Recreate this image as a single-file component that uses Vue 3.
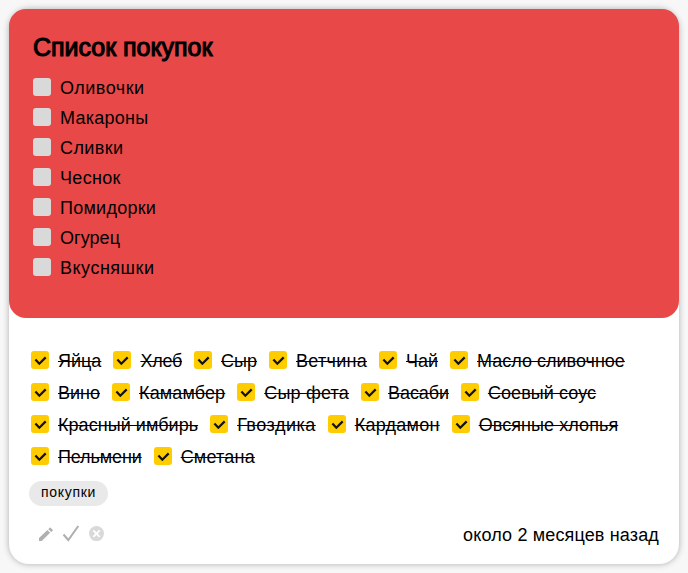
<script setup>
// Each entry: label and letter tracking in px
const pending = [
  ['Оливочки', 0.5], ['Макароны', 0.25], ['Сливки', 0.4], ['Чеснок', 0.33],
  ['Помидорки', 0.25], ['Огурец', 0.05], ['Вкусняшки', 0.5],
]
const done = [
  [['Яйца', 0], ['Хлеб', -0.25], ['Сыр', 0], ['Ветчина', 0.28], ['Чай', 0], ['Масло сливочное', 0]],
  [['Вино', 0], ['Камамбер', 0.13], ['Сыр фета', 0.2], ['Васаби', -0.1], ['Соевый соус', 0.08]],
  [['Красный имбирь', 0.05], ['Гвоздика', 0.5], ['Кардамон', 0.25], ['Овсяные хлопья', 0.07]],
  [['Пельмени', -0.12], ['Сметана', 0.2]],
]
</script>

<template>
  <article class="card">
    <section class="pending">
      <h1>Список покупок</h1>
      <ul class="todo">
        <li v-for="[name, track] in pending" :key="name"><span class="box"></span><span class="name" :style="{ letterSpacing: track + 'px' }">{{ name }}</span></li>
      </ul>
    </section>
    <section class="bought">
      <div v-for="(row, i) in done" :key="i" class="row">
        <label v-for="[name, track] in row" :key="name" class="item">
          <span class="box checked">
            <svg width="18" height="18" viewBox="0 0 18 18"><path d="M4.4 8.6 L8.3 12.7 L14.7 6.4" /></svg>
          </span>
          <s :style="{ letterSpacing: track + 'px' }">{{ name }}</s>
        </label>
      </div>
    </section>
    <div class="tags"><span class="tag">покупки</span></div>
    <footer>
      <div class="actions">
        <svg width="16" height="16" viewBox="0 0 16 16"><path fill="#b0b0b0" d="M1 12.1 9.4 4l2.7 2.7L3.8 15H1zM10.3 3.2l1.3-1.4q.5-.4 1 0l2 2q.4.5 0 1l-1.4 1.3z" /></svg>
        <svg width="18" height="18" viewBox="0 0 18 18"><path fill="none" stroke="#b0b0b0" stroke-width="2.1" d="M1.5 9.5 6.3 15 16.3 1" /></svg>
        <svg width="16" height="16" viewBox="0 0 16 16"><circle cx="8.5" cy="7.6" r="7.5" fill="#d9d9d9" /><path stroke="#fff" stroke-width="1.9" d="M5.3 4.4l6.4 6.4M11.7 4.4l-6.4 6.4" /></svg>
      </div>
      <time>около 2 месяцев назад</time>
    </footer>
  </article>
</template>

<style>
body { background: #f7f7f7; }
</style>

<style scoped>
.card {
  box-sizing: border-box;
  width: 670px;
  height: 555px;
  margin: 9px;
  border-radius: 20px;
  background: #fff;
  box-shadow: 0 0 6px rgba(0, 0, 0, 0.3);
  font: 18px/20px "Liberation Sans", Arial, sans-serif;
  color: #000;
  display: flow-root;
}
.pending {
  box-sizing: border-box;
  height: 309px;
  padding: 24px;
  border-radius: 17px;
  background: #e84848;
}
h1 {
  margin: 0;
  font-size: 25px;
  line-height: 29px;
  font-weight: 400;
  -webkit-text-stroke: 1.1px #000;
  letter-spacing: -0.02px;
}
.todo { list-style: none; margin: 10px 0 0; padding: 0; }
.todo li { display: flex; align-items: center; gap: 9px; height: 30px; }
.box { width: 18px; height: 18px; border-radius: 3px; background: #d9d9d9; flex: none; }
.todo .name { padding-top: 2px; }
.bought { padding: 26px 22px 0; }
.row { display: flex; gap: 12px; height: 32px; white-space: nowrap; }
.item { display: flex; align-items: center; gap: 9px; }
.item s { padding-top: 2px; }
.checked { background: #fc0; }
.checked svg { display: block; fill: none; stroke: #111; stroke-width: 2.2; }
.tags { display: flex; padding: 9px 20px 0; }
.tag {
  height: 25px;
  padding: 0 12px;
  border-radius: 13px;
  background: #e9e9e9;
  font-size: 14px;
  letter-spacing: 0.7px;
  line-height: 23px;
}
footer { display: flex; justify-content: space-between; align-items: flex-start; padding: 18px 20px 0 29px; }
.actions { display: flex; align-items: center; gap: 8px; padding-top: 1px; }
footer time { padding-top: 1px; letter-spacing: 0.15px; }
</style>
